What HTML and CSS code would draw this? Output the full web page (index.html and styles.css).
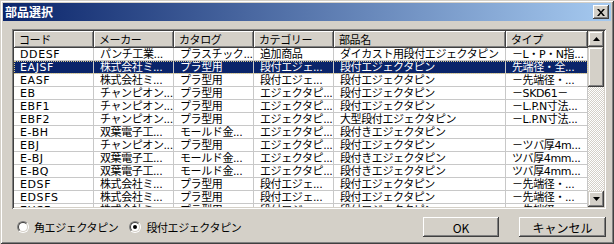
FILE: index.html
```html
<!DOCTYPE html>
<html lang="ja">
<head>
  <meta charset="UTF-8">
  <title>部品選択</title>
  <link rel="stylesheet" href="styles.css">
</head>
<body>
  <div class="window">
    <div class="titlebar">
      <span class="title">部品選択</span>
      <button class="close-btn" type="button">
        <svg width="8" height="7" viewBox="0 0 8 7"><path d="M0 0h2l2 2.5L6 0h2L5 3.5 8 7H6L4 4.5 2 7H0l3-3.5z" fill="#000"/></svg>
      </button>
    </div>

    <div class="dialog-body">
      <!-- part list -->
      <div class="listview">
        <div class="grid">
          <div class="row head">
            <span>コード</span><span>メーカー</span><span>カタログ</span><span>カテゴリー</span><span>部品名</span><span>タイプ</span>
          </div>
          <div class="row">
            <span>DDESF</span><span>パンチ工業...</span><span>プラスチック...</span><span>追加商品</span><span>ダイカスト用段付エジェクタピン</span><span>－L・P・N指...</span>
          </div>
          <div class="row selected">
            <span>EAJSF</span><span>株式会社ミ...</span><span>プラ型用</span><span>段付エジェ...</span><span>段付エジェクタピン</span><span>先端径・全...</span>
          </div>
          <div class="row">
            <span>EASF</span><span>株式会社ミ...</span><span>プラ型用</span><span>段付エジェ...</span><span>段付エジェクタピン</span><span>－先端径・...</span>
          </div>
          <div class="row">
            <span>EB</span><span>チャンピオン...</span><span>プラ型用</span><span>エジェクタピ...</span><span>段付エジェクタピン</span><span>－SKD61－</span>
          </div>
          <div class="row">
            <span>EBF1</span><span>チャンピオン...</span><span>プラ型用</span><span>エジェクタピ...</span><span>段付エジェクタピン</span><span>－L.P.N寸法...</span>
          </div>
          <div class="row">
            <span>EBF2</span><span>チャンピオン...</span><span>プラ型用</span><span>エジェクタピ...</span><span>大型段付エジェクタピン</span><span>－L.P.N寸法...</span>
          </div>
          <div class="row">
            <span>E-BH</span><span>双葉電子工...</span><span>モールド金...</span><span>エジェクタピ...</span><span>段付きエジェクタピン</span><span></span>
          </div>
          <div class="row">
            <span>EBJ</span><span>チャンピオン...</span><span>プラ型用</span><span>エジェクタピ...</span><span>段付エジェクタピン</span><span>－ツバ厚4m...</span>
          </div>
          <div class="row">
            <span>E-BJ</span><span>双葉電子工...</span><span>モールド金...</span><span>エジェクタピ...</span><span>段付きエジェクタピン</span><span>ツバ厚4mm...</span>
          </div>
          <div class="row">
            <span>E-BQ</span><span>双葉電子工...</span><span>モールド金...</span><span>エジェクタピ...</span><span>段付きエジェクタピン</span><span>ツバ厚4mm...</span>
          </div>
          <div class="row">
            <span>EDSF</span><span>株式会社ミ...</span><span>プラ型用</span><span>段付エジェ...</span><span>段付エジェクタピン</span><span>－先端径・...</span>
          </div>
          <div class="row">
            <span>EDSFS</span><span>株式会社ミ...</span><span>プラ型用</span><span>段付エジェ...</span><span>段付エジェクタピン</span><span>－先端径・...</span>
          </div>
          <div class="row">
            <span>EHSF</span><span>株式会社ミ...</span><span>プラ型用</span><span>段付エジェ...</span><span>段付エジェクタピン</span><span>－先端径・...</span>
          </div>
        </div>

        <div class="vscroll">
          <div class="sb-btn">
            <svg width="7" height="4" viewBox="0 0 7 4"><path d="M3.5 0L7 4H0z" fill="#000"/></svg>
          </div>
          <div class="sb-thumb"></div>
          <div class="sb-track"></div>
          <div class="sb-btn">
            <svg width="7" height="4" viewBox="0 0 7 4"><path d="M0 0h7L3.5 4z" fill="#000"/></svg>
          </div>
        </div>
      </div>

      <!-- options and buttons -->
      <div class="footer">
        <label class="option"><span class="radio"></span>角エジェクタピン</label>
        <label class="option"><span class="radio checked"></span>段付エジェクタピン</label>
        <button class="btn btn-ok" type="button">OK</button>
        <button class="btn btn-cancel" type="button">キャンセル</button>
      </div>
    </div>
  </div>
</body>
</html>
```

FILE: styles.css
```css
body {
  margin: 0;
  background: #d4d0c8;
  font-family: "DejaVu Sans", "Noto Sans CJK JP", sans-serif;
  font-size: 11px;
}

.window {
  width: 614px;
  height: 244px;
  box-sizing: border-box;
  padding: 3px;
  background: #d4d0c8;
  box-shadow: inset 1px 1px #d4d0c8, inset -1px -1px #404040,
              inset 2px 2px #fff, inset -2px -2px #808080;
  display: flex;
  flex-direction: column;
}

.titlebar {
  height: 18px;
  display: flex;
  align-items: center;
  justify-content: space-between;
  padding: 0 2px 0 2px;
  background: linear-gradient(to right, #0a246a, #a6caf0);
}

.title {
  color: #fff;
  font-family: "Noto Sans CJK JP", sans-serif;
  font-weight: bold;
  font-size: 12px;
  line-height: 18px;
}

.close-btn {
  width: 16px;
  height: 14px;
  padding: 0;
  border: none;
  display: flex;
  align-items: center;
  justify-content: center;
  background: #d4d0c8;
  box-shadow: inset -1px -1px #404040, inset 1px 1px #fff,
              inset -2px -2px #808080;
}

.dialog-body {
  flex: 1;
  padding: 8px 5px 0 9px;
  display: flex;
  flex-direction: column;
}

/* list view */
.listview {
  height: 180px;
  box-sizing: border-box;
  padding: 2px;
  background: #fff;
  box-shadow: inset 1px 1px #808080, inset -1px -1px #fff,
              inset 2px 2px #404040, inset -2px -2px #d4d0c8;
  display: flex;
}

.grid {
  flex: 1;
  overflow: hidden;
}

.row {
  display: grid;
  grid-template-columns: 80px 80px 80px 80px 172px 1fr;
  height: 13px;
  line-height: 13px;
  color: #000;
  letter-spacing: -0.4px;
}

.row span {
  padding-left: 6px;
  border-right: 1px solid #c8c8c8;
  border-bottom: 1px solid #c8c8c8;
  white-space: nowrap;
  overflow: hidden;
}

.row span:first-child {
  letter-spacing: 0.6px;
}

.row.head {
  height: 17px;
  line-height: 17px;
}

.row.head span {
  padding-left: 5px;
  border: none;
  background: #d4d0c8;
  font-family: "Noto Sans CJK JP", sans-serif;
  letter-spacing: -0.4px;
  box-shadow: inset -1px -1px #404040, inset 1px 1px #fff,
              inset -2px -2px #808080;
}

.row.selected {
  background: #0a246a;
  color: #fff;
  outline: 1px dotted #d8c88a;
  outline-offset: -1px;
}

/* scroll bar */
.vscroll {
  width: 16px;
  display: flex;
  flex-direction: column;
}

.sb-btn,
.sb-thumb {
  background: #d4d0c8;
  box-shadow: inset -1px -1px #404040, inset 1px 1px #d4d0c8,
              inset -2px -2px #808080, inset 2px 2px #fff;
}

.sb-btn {
  height: 16px;
  display: flex;
  align-items: center;
  justify-content: center;
}

.sb-thumb {
  height: 40px;
}

.sb-track {
  flex: 1;
  background: conic-gradient(#fff 25%, #d4d0c8 0 50%, #fff 0 75%, #d4d0c8 0);
  background-size: 2px 2px;
}

/* footer */
.footer {
  display: flex;
  align-items: center;
  margin-top: 8px;
  font-family: "Noto Sans CJK JP", sans-serif;
  letter-spacing: -0.4px;
}

.option {
  display: flex;
  align-items: center;
  margin-left: 5px;
  margin-right: 6px;
}

.radio {
  width: 12px;
  height: 12px;
  box-sizing: border-box;
  border-radius: 50%;
  border: 1px solid;
  border-color: #808080 #fff #fff #808080;
  margin-right: 5px;
  position: relative;
}

.radio::before {
  content: "";
  position: absolute;
  inset: 0;
  border-radius: 50%;
  border: 1px solid;
  border-color: #404040 #d4d0c8 #d4d0c8 #404040;
  background: #fff;
}

.radio.checked::after {
  content: "";
  position: absolute;
  left: 3px;
  top: 3px;
  width: 4px;
  height: 4px;
  border-radius: 50%;
  background: #000;
}

.btn {
  height: 20px;
  padding: 0;
  border: none;
  font-family: "Noto Sans CJK JP", sans-serif;
  font-size: 12px;
  color: #000;
  background: #d4d0c8;
  box-shadow: inset -1px -1px #404040, inset 1px 1px #fff,
              inset -2px -2px #808080, inset 2px 2px #d4d0c8;
}

.btn-ok {
  width: 76px;
  margin-left: auto;
}

.btn-cancel {
  width: 87px;
  margin-left: 20px;
}
```
